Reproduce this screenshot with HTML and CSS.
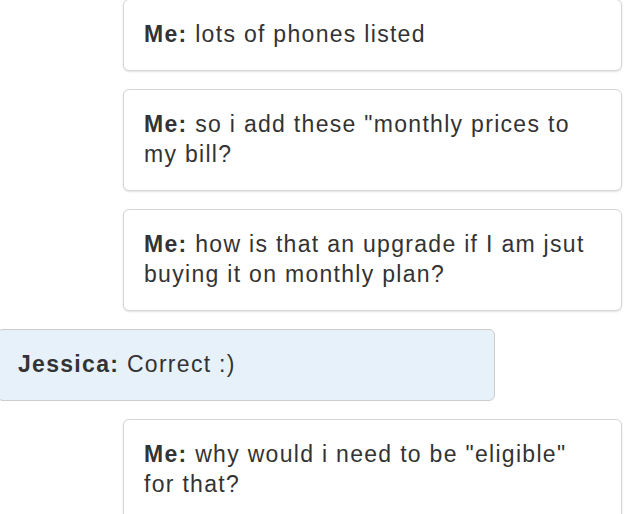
FILE: index.html
```html
<!DOCTYPE html>
<html>
<head>
<meta charset="utf-8">
<link rel="stylesheet" href="styles.css">
</head>
<body>
<div class="chat">
  <div class="msg me"><b>Me:</b> lots of phones listed</div>
  <div class="msg me"><b>Me:</b> so i add these "monthly prices to my bill?</div>
  <div class="msg me"><b>Me:</b> how is that an upgrade if I am jsut buying it on monthly plan?</div>
  <div class="msg agent"><b>Jessica:</b> Correct :)</div>
  <div class="msg me"><b>Me:</b> why would i need to be "eligible" for that?</div>
</div>
</body>
</html>
```
FILE: styles.css
```css
html, body {
  margin: 0;
  padding: 0;
  background: #ffffff;
}
.chat {
  display: flex;
  flex-direction: column;
  gap: 18px;
  margin-top: -1px;
  padding-right: 8px;
  font-family: "Liberation Sans", Arial, sans-serif;
  font-size: 23px;
  letter-spacing: 1.3px;
  line-height: 30px;
  color: #333333;
}
.msg {
  box-sizing: border-box;
  padding: 19px 20px 21px 20px;
  border: 1px solid #d6d6d6;
  border-radius: 6px;
}
.msg b {
  font-weight: bold;
}
.me {
  align-self: flex-end;
  width: 499px;
  background: #ffffff;
  box-shadow: 0 1px 2px rgba(0, 0, 0, 0.12);
}
.agent {
  align-self: flex-start;
  width: 498px;
  margin-left: -3px;
  background: #e7f1fa;
  border-color: #cccccc;
}
```
